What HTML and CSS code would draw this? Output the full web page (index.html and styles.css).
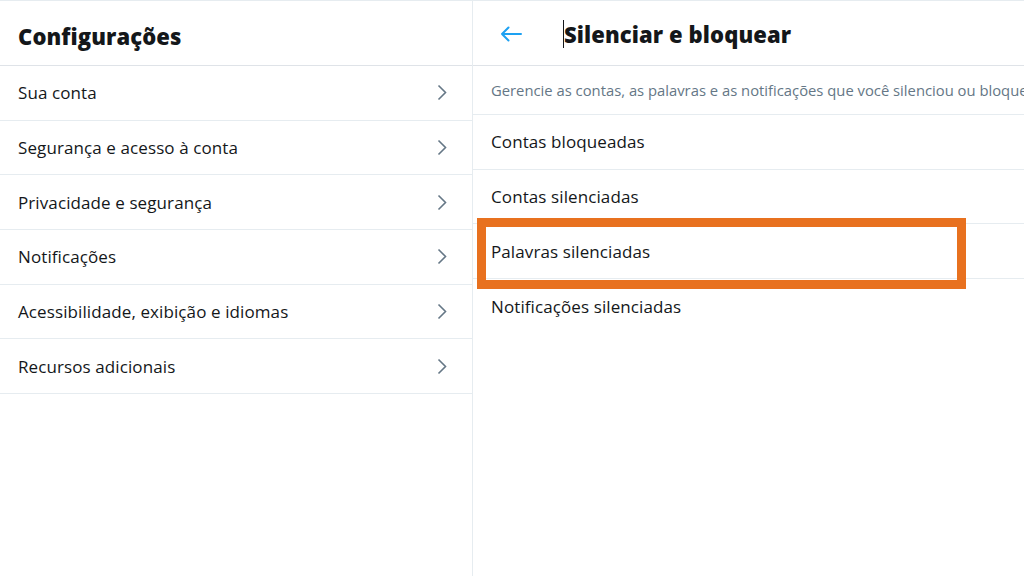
FILE: index.html
```html
<!DOCTYPE html>
<html lang="pt-BR">
<head>
    <meta charset="UTF-8">
    <title>Configurações</title>
    <link rel="stylesheet" href="styles.css">
</head>
<body>
    <div class="app">
        <div class="sidebar">
            <div class="header">
                <h2>Configurações</h2>
            </div>
            <div class="menu-item"><span>Sua conta</span><svg class="chevron" viewBox="0 0 10 17"><path d="M1.5 1.5 L8.5 8.5 L1.5 15.5"/></svg></div>
            <div class="menu-item"><span>Segurança e acesso à conta</span><svg class="chevron" viewBox="0 0 10 17"><path d="M1.5 1.5 L8.5 8.5 L1.5 15.5"/></svg></div>
            <div class="menu-item"><span>Privacidade e segurança</span><svg class="chevron" viewBox="0 0 10 17"><path d="M1.5 1.5 L8.5 8.5 L1.5 15.5"/></svg></div>
            <div class="menu-item"><span>Notificações</span><svg class="chevron" viewBox="0 0 10 17"><path d="M1.5 1.5 L8.5 8.5 L1.5 15.5"/></svg></div>
            <div class="menu-item"><span>Acessibilidade, exibição e idiomas</span><svg class="chevron" viewBox="0 0 10 17"><path d="M1.5 1.5 L8.5 8.5 L1.5 15.5"/></svg></div>
            <div class="menu-item"><span>Recursos adicionais</span><svg class="chevron" viewBox="0 0 10 17"><path d="M1.5 1.5 L8.5 8.5 L1.5 15.5"/></svg></div>
        </div>

        <div class="main">
            <div class="header header-main">
                <svg class="back" viewBox="0 0 22 16"><path d="M21 8 H2 M8.5 1.5 L2 8 L8.5 14.5"/></svg>
                <h2><span class="caret"></span>Silenciar e bloquear</h2>
            </div>
            <div class="description">Gerencie as contas, as palavras e as notificações que você silenciou ou bloqueou.</div>
            <div class="option">Contas bloqueadas</div>
            <div class="option">Contas silenciadas</div>
            <div class="option highlighted">Palavras silenciadas<span class="mark"></span></div>
            <div class="option last">Notificações silenciadas</div>
        </div>
    </div>
</body>
</html>
```

FILE: styles.css
```css
body {
    margin: 0;
    font-family: "Open Sans", "Noto Sans", sans-serif;
    color: #14171a;
    background: #fff;
    overflow: hidden;
}
.app {
    display: flex;
    height: 576px;
    border-top: 1px solid #e6ecf0;
    box-sizing: border-box;
}
.sidebar {
    width: 472px;
    border-right: 1px solid #e6ecf0;
    flex-shrink: 0;
}
.main {
    flex: 1;
    min-width: 0;
    overflow: hidden;
}
.header {
    height: 65px;
    box-sizing: border-box;
    padding-top: 5px;
    border-bottom: 1px solid #dfe3e8;
    display: flex;
    align-items: center;
    padding-left: 18px;
}
.header h2 {
    margin: 0;
    font-size: 22px;
    font-weight: 800;
    letter-spacing: 0.1px;
}
.header-main {
    padding-left: 27px;
    padding-top: 1px;
}
.back {
    width: 22px;
    height: 16px;
    margin-right: 41px;
    fill: none;
    stroke: #1da1f2;
    stroke-width: 2;
    stroke-linecap: round;
    stroke-linejoin: round;
}
.header-main h2 {
    padding-top: 4px;
}
.caret {
    display: inline-block;
    width: 1px;
    height: 28px;
    background: #14171a;
    vertical-align: middle;
    position: relative;
    top: -4px;
}
.menu-item {
    height: 54.7px;
    box-sizing: border-box;
    border-bottom: 1px solid #e6ecf0;
    display: flex;
    align-items: center;
    justify-content: space-between;
    padding: 0 25px 0 18px;
    font-size: 17px;
    letter-spacing: 0.1px;
}
.chevron {
    width: 10px;
    height: 17px;
    fill: none;
    stroke: #657786;
    stroke-width: 1.6;
}
.description {
    height: 49px;
    box-sizing: border-box;
    border-bottom: 1px solid #e6ecf0;
    display: flex;
    align-items: center;
    padding-left: 18px;
    font-size: 14.8px;
    color: #657786;
    white-space: nowrap;
}
.option {
    height: 54.7px;
    box-sizing: border-box;
    border-bottom: 1px solid #e6ecf0;
    display: flex;
    align-items: center;
    padding-left: 18px;
    font-size: 17px;
    letter-spacing: 0.1px;
}
.option.last {
    border-bottom: none;
}
.highlighted {
    position: relative;
}
.mark {
    position: absolute;
    left: 4px;
    top: -6px;
    width: 489px;
    height: 71px;
    box-sizing: border-box;
    border: 9px solid #e8711f;
}
```
